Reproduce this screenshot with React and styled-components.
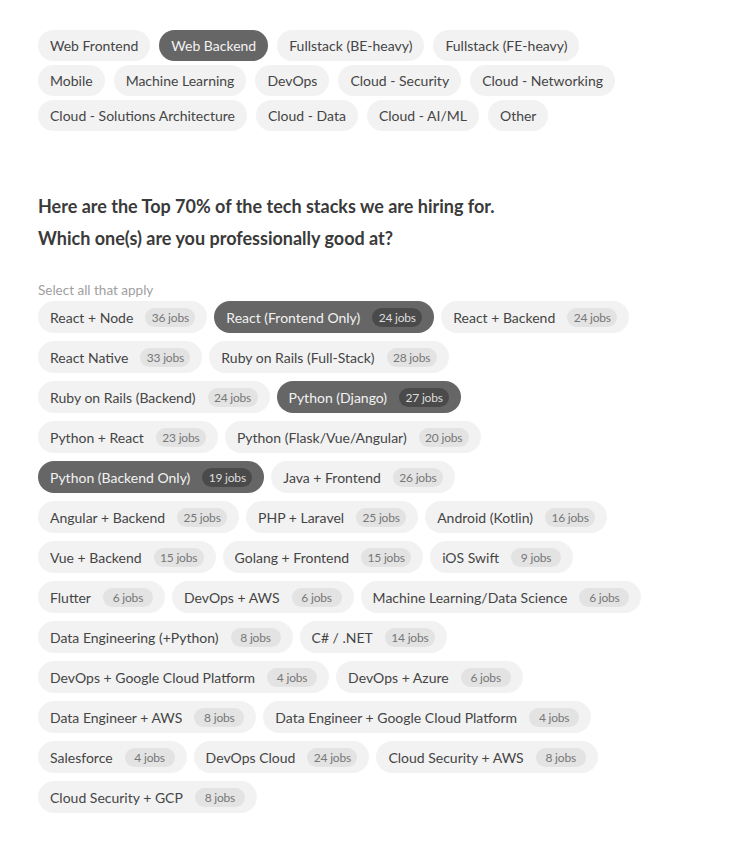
import React, { useState } from "react";
import styled, { createGlobalStyle } from "styled-components";

const GlobalStyle = createGlobalStyle`
  html, body { margin: 0; padding: 0; background: #ffffff; }
  body { font-family: Lato, "Liberation Sans", sans-serif; color: #444; }
`;

const Page = styled.div`
  padding: 30px 38px 40px 38px;
  max-width: 604px;
`;

const ChipGroup = styled.div`
  display: flex;
  flex-wrap: wrap;
  column-gap: ${(p) => p.$colGap}px;
  row-gap: ${(p) => p.$rowGap}px;
`;

const Chip = styled.button`
  display: inline-flex;
  align-items: center;
  height: ${(p) => p.$h}px;
  padding: 0 12px;
  border: none;
  border-radius: 16px;
  background: ${(p) => (p.$selected ? "#666666" : "#f2f2f2")};
  color: ${(p) => (p.$selected ? "#f2f2f2" : "#454545")};
  font-family: Lato, "Liberation Sans", sans-serif;
  font-size: 14px;
  cursor: pointer;
  white-space: nowrap;
`;

const Badge = styled.span`
  display: inline-flex;
  align-items: center;
  justify-content: center;
  box-sizing: border-box;
  min-width: 50px;
  height: 19px;
  margin-left: 12px;
  padding: 0 5px;
  border-radius: 10px;
  background: ${(p) => (p.$selected ? "#4a4a4a" : "#e3e3e3")};
  color: ${(p) => (p.$selected ? "#dddddd" : "#777777")};
  font-size: 12px;
  letter-spacing: -0.2px;
`;

const Heading = styled.h2`
  margin: 59px 0 0 0;
  font-family: Lato, "Liberation Sans", sans-serif;
  font-weight: 700;
  font-size: 18px;
  line-height: 32px;
  color: #3a3a3a;
`;

const Hint = styled.div`
  margin: 28px 0 3px 0;
  font-size: 13.5px;
  line-height: 16px;
  color: #a0a0a0;
`;

const roles = [
  "Web Frontend",
  "Web Backend",
  "Fullstack (BE-heavy)",
  "Fullstack (FE-heavy)",
  "Mobile",
  "Machine Learning",
  "DevOps",
  "Cloud - Security",
  "Cloud - Networking",
  "Cloud - Solutions Architecture",
  "Cloud - Data",
  "Cloud - AI/ML",
  "Other",
];

const stacks = [
  ["React + Node", 36],
  ["React (Frontend Only)", 24],
  ["React + Backend", 24],
  ["React Native", 33],
  ["Ruby on Rails (Full-Stack)", 28],
  ["Ruby on Rails (Backend)", 24],
  ["Python (Django)", 27],
  ["Python + React", 23],
  ["Python (Flask/Vue/Angular)", 20],
  ["Python (Backend Only)", 19],
  ["Java + Frontend", 26],
  ["Angular + Backend", 25],
  ["PHP + Laravel", 25],
  ["Android (Kotlin)", 16],
  ["Vue + Backend", 15],
  ["Golang + Frontend", 15],
  ["iOS Swift", 9],
  ["Flutter", 6],
  ["DevOps + AWS", 6],
  ["Machine Learning/Data Science", 6],
  ["Data Engineering (+Python)", 8],
  ["C# / .NET", 14],
  ["DevOps + Google Cloud Platform", 4],
  ["DevOps + Azure", 6],
  ["Data Engineer + AWS", 8],
  ["Data Engineer + Google Cloud Platform", 4],
  ["Salesforce", 4],
  ["DevOps Cloud", 24],
  ["Cloud Security + AWS", 8],
  ["Cloud Security + GCP", 8],
];

export default function App() {
  const [role, setRole] = useState("Web Backend");
  const [picked, setPicked] = useState(
    new Set(["React (Frontend Only)", "Python (Django)", "Python (Backend Only)"])
  );
  const toggle = (name) => {
    const next = new Set(picked);
    if (next.has(name)) next.delete(name);
    else next.add(name);
    setPicked(next);
  };
  return (
    <>
      <GlobalStyle />
      <Page>
        <ChipGroup $colGap={9} $rowGap={4}>
          {roles.map((r) => (
            <Chip key={r} $h={31} $selected={r === role} onClick={() => setRole(r)}>
              {r}
            </Chip>
          ))}
        </ChipGroup>
        <Heading>
          Here are the Top 70% of the tech stacks we are hiring for.
          <br />
          Which one(s) are you professionally good at?
        </Heading>
        <Hint>Select all that apply</Hint>
        <ChipGroup $colGap={7} $rowGap={8}>
          {stacks.map(([name, n]) => {
            const sel = picked.has(name);
            return (
              <Chip key={name} $h={32} $selected={sel} onClick={() => toggle(name)}>
                {name}
                <Badge $selected={sel}>{n} jobs</Badge>
              </Chip>
            );
          })}
        </ChipGroup>
      </Page>
    </>
  );
}
